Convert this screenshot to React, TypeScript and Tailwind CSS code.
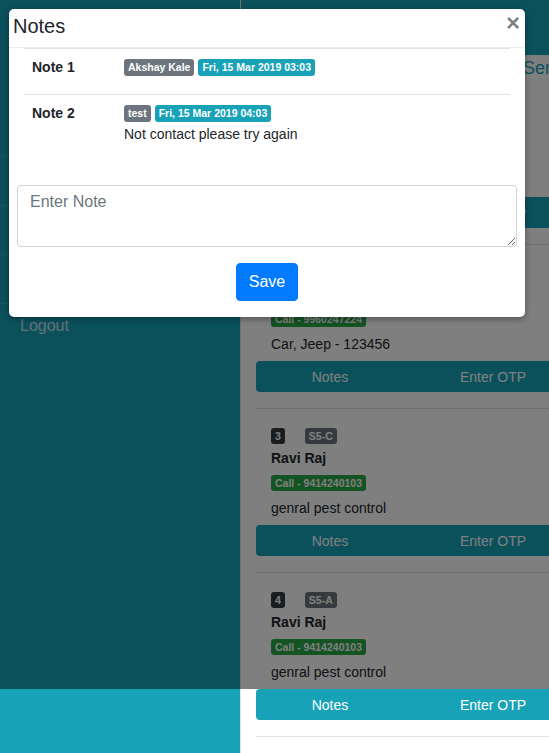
import { FunctionComponent, ReactElement } from 'react';

interface Booking {
  readonly index: string;
  readonly slot: string;
  readonly name: string;
  readonly phone: string;
  readonly service: string;
}

interface Note {
  readonly title: string;
  readonly author: string;
  readonly date: string;
  readonly text: string;
}

const bookings: Booking[] = [
  { index: '1', slot: 'S5-B', name: 'Akshay Kale', phone: '9960247224', service: 'Car, Jeep - 123456' },
  { index: '2', slot: 'S5-B', name: 'Akshay Kale', phone: '9960247224', service: 'Car, Jeep - 123456' },
  { index: '3', slot: 'S5-C', name: 'Ravi Raj', phone: '9414240103', service: 'genral pest control' },
  { index: '4', slot: 'S5-A', name: 'Ravi Raj', phone: '9414240103', service: 'genral pest control' }
];

const notes: Note[] = [
  { title: 'Note 1', author: 'Akshay Kale', date: 'Fri, 15 Mar 2019 03:03', text: '' },
  { title: 'Note 2', author: 'test', date: 'Fri, 15 Mar 2019 04:03', text: 'Not contact please try again' }
];

const sideItems = ['Dashboard', 'Bookings', 'Profile'];

const badge = 'inline-block rounded-[3px] px-[4px] py-[3px] text-[10.5px] font-bold leading-none text-white';

/**
 * One booking entry of the list behind the modal
 */
const BookingCard: FunctionComponent<{ booking: Booking }> = ({ booking }): ReactElement => {
  const { index, slot, name, phone, service } = booking;
  return (
    <div className="w-[326px] border-b border-[#dee2e6] pt-[19px] pb-[16px]">
      <div className="flex h-[16px] items-center pl-[15px]">
        <span className={`${badge} bg-[#343a40]`}>{index}</span>
        <span className={`${badge} ml-5 bg-[#6c757d]`}>{slot}</span>
      </div>
      <p className="mt-1 pl-[15px] text-sm leading-[21px] font-bold text-[#212529]">
        {name}
      </p>
      <div className="mt-[6px] flex h-[16px] items-center pl-[15px]">
        <span className={`${badge} bg-[#28a745]`}>Call - {phone}</span>
      </div>
      <p className="mt-[7px] pl-[15px] text-sm leading-[21px] text-[#212529]">
        {service}
      </p>
      <div className="mt-[6px] flex h-[31px] overflow-hidden rounded-[4px] bg-[#17a2b8] text-sm text-white">
        <div className="flex w-[148px] items-center justify-center">Notes</div>
        <div className="flex w-[178px] items-center justify-center">Enter OTP</div>
      </div>
    </div>
  );
};

/**
 * The notes modal shown over the page
 */
const NotesModal: FunctionComponent = (): ReactElement => {
  return (
    <div className="absolute top-[9px] left-[9px] w-[516px] rounded-[5px] bg-white shadow-[0_2px_6px_rgba(0,0,0,0.35)]">
      <div className="flex h-[39px] items-start justify-between border-b border-[#e9ecef] pt-[5px] pr-[5px] pl-1">
        <p className="text-[20px] leading-[24px] text-[#212529]">Notes</p>
        <span className="-mt-[3px] text-[24px] leading-[24px] font-bold text-black/50">×</span>
      </div>
      <div className="px-2 pb-4">
        <div className="mx-[7px] border-t border-[#dee2e6]">
          {
            notes.map((note, i) => (
              <div
                className={`flex pt-2 ${i === 0 ? 'h-[46px] border-b border-[#dee2e6]' : 'pb-2'}`}
                key={`note-${note.title}`}
              >
                <p className="w-[92px] px-2 text-sm leading-[21px] font-bold text-[#212529]">
                  {note.title}
                </p>
                <div className="flex flex-col px-2">
                  <div className="flex h-[21px] items-center gap-1">
                    <span className={`${badge} bg-[#6c757d]`}>{note.author}</span>
                    <span className={`${badge} bg-[#17a2b8]`}>{note.date}</span>
                  </div>
                  {
                    note.text && (
                      <p className="text-sm leading-[21px] text-[#212529]">{note.text}</p>
                    )
                  }
                </div>
              </div>
            ))
          }
        </div>
        <textarea
          className="mt-8 block h-[62px] w-full rounded-[4px] border border-[#ced4da] px-3 py-1 text-base leading-6 text-[#495057] placeholder-[#6c757d] outline-none"
          placeholder="Enter Note"
        />
        <div className="mt-4 flex justify-center">
          <button className="h-[38px] rounded-[4px] border border-[#007bff] bg-[#007bff] px-3 text-base text-white">
            Save
          </button>
        </div>
      </div>
    </div>
  );
};

const App: FunctionComponent = (): ReactElement => {
  return (
    <div className="relative flex h-[753px] w-[549px] overflow-hidden bg-white font-['Liberation_Sans',Arial,sans-serif]">
      <aside className="flex w-[240px] shrink-0 flex-col bg-[#17a2b8] text-white/75">
        <div className="h-[156px]" />
        {
          sideItems.map((item) => (
            <div
              className="h-[49px] border-t border-white/10 px-5 pt-[10px] text-base leading-6"
              key={`side-${item}`}
            >
              {item}
            </div>
          ))
        }
        <div className="h-[49px] border-t border-white/10 px-5 pt-[10px] text-base leading-6">
          Logout
        </div>
      </aside>
      <main className="flex-1 border-l border-[#dee2e6]">
        <div className="h-[55px] bg-[#17a2b8]" />
        <div className="h-[26px] pl-[282px] text-[18px] leading-[26px] whitespace-nowrap text-[#17a2b8]">
          Services
        </div>
        <div className="pl-[15px]">
          {
            bookings.map((booking) => (
              <BookingCard booking={booking} key={`booking-${booking.index}`} />
            ))
          }
        </div>
      </main>
      <div className="absolute top-0 left-0 h-[689px] w-full bg-black/50" />
      <NotesModal />
    </div>
  );
};

export default App;
